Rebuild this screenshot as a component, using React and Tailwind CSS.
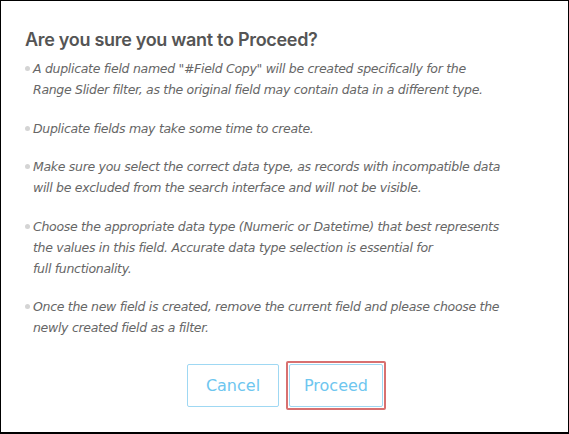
export default function App() {
  const items = [
    ['A duplicate field named "#Field Copy" will be created specifically for the', 'Range Slider filter, as the original field may contain data in a different type.'],
    ['Duplicate fields may take some time to create.'],
    ['Make sure you select the correct data type, as records with incompatible data', 'will be excluded from the search interface and will not be visible.'],
    ['Choose the appropriate data type (Numeric or Datetime) that best represents', 'the values in this field. Accurate data type selection is essential for', 'full functionality.'],
    ['Once the new field is created, remove the current field and please choose the', 'newly created field as a filter.'],
  ];

  return (
    <div className="w-[569px] h-[434px] border border-b-2 border-black bg-white px-6 pt-[25px] font-['DejaVu_Sans',sans-serif]">
      <h1 className="font-['Inter',sans-serif] text-[18px] leading-[28px] font-semibold tracking-[-0.3px] text-[#555555]">Are you sure you want to Proceed?</h1>

      <ul className="mt-[4px] flex flex-col gap-[17.5px]">
        {items.map((lines, i) => (
          <li key={i} className="flex">
            <span className="w-[8px] shrink-0 pt-[8px]">
              <span className="block w-[5px] h-[5px] rounded-full bg-[#d4d4d4]"></span>
            </span>
            <p className="italic text-[12.5px] leading-[21px] text-[#666666] tracking-[-0.3px]">
              {lines.map((l, j) => (
                <span key={j}>
                  {l}
                  {j < lines.length - 1 && <br />}
                </span>
              ))}
            </p>
          </li>
        ))}
      </ul>

      <div className="flex justify-center items-center gap-[7px] mt-[23px] ml-1">
        <button className="w-[92px] h-[43px] border border-[#9fd8f3] rounded-[2px] text-[16px] text-[#6ec6ef] bg-white">Cancel</button>
        <div className="p-px border-2 border-[#d87070] rounded-[2px]">
          <button className="w-[94px] h-[43px] border border-[#9fd8f3] rounded-[2px] text-[16px] text-[#6ec6ef] bg-white">Proceed</button>
        </div>
      </div>
    </div>
  );
}
